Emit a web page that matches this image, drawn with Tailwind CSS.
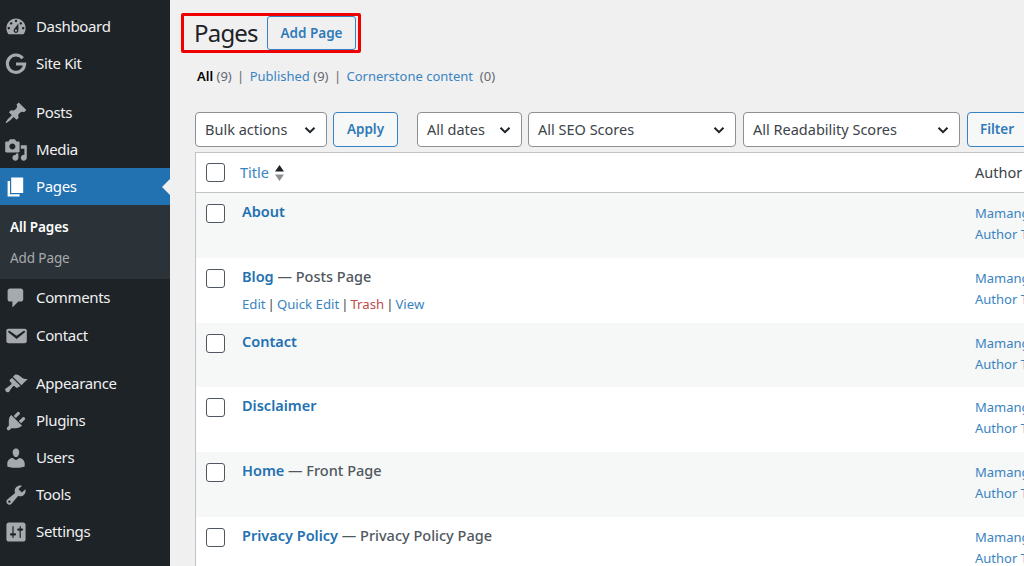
<!DOCTYPE html>
<html lang="en">
<head>
    <meta charset="UTF-8">
    <title>Pages</title>
    <script src="https://cdn.jsdelivr.net/npm/@tailwindcss/browser@4"></script>
</head>
<body class="bg-[#f0f0f1] font-['Noto_Sans',sans-serif] text-[#3c434a] text-[14.5px]">
<div class="flex h-[566px] w-[1024px] overflow-hidden">

    <!-- Sidebar -->
    <aside class="w-[170px] shrink-0 bg-[#1d2327] pt-[8px] text-[#f0f0f1] text-[15px] tracking-[-0.35px]">
        <a class="flex items-center h-[37px] gap-[8px] pl-[4px]"><svg class="w-6 h-6 fill-[#a7aaad]" viewBox="0 0 20 20"><path fill-rule="evenodd" d="M3.76 16h12.48c1.1-1.37 1.76-3.11 1.76-5 0-4.42-3.58-8-8-8s-8 3.58-8 8c0 1.89.66 3.63 1.76 5zM10 4c.55 0 1 .45 1 1s-.45 1-1 1-1-.45-1-1 .45-1 1-1zM6 6c.55 0 1 .45 1 1s-.45 1-1 1-1-.45-1-1 .45-1 1-1zm8 0c.55 0 1 .45 1 1s-.45 1-1 1-1-.45-1-1 .45-1 1-1zm-5.37 5.55L12 7v6c0 1.1-.9 2-2 2s-2-.9-2-2c0-.57.24-1.08.63-1.45zM4 10c.55 0 1 .45 1 1s-.45 1-1 1-1-.45-1-1 .45-1 1-1zm12 0c.55 0 1 .45 1 1s-.45 1-1 1-1-.45-1-1 .45-1 1-1zm-5 3c0-.55-.45-1-1-1s-1 .45-1 1 .45 1 1 1 1-.45 1-1z"/></svg>Dashboard</a>
        <a class="flex items-center h-[37px] gap-[8px] pl-[4px]"><svg class="w-6 h-6 fill-none stroke-[#a7aaad] stroke-[2.6]" viewBox="0 0 20 20"><path d="M15.6 5.2A7.2 7.2 0 1 0 17.2 10H10"/></svg>Site Kit</a>

        <a class="flex items-center h-[37px] gap-[8px] pl-[4px] mt-[12px]"><svg class="w-6 h-6 fill-[#a7aaad]" viewBox="0 0 20 20"><path d="M10.44 3.02l1.82-1.82 6.36 6.35-1.83 1.82c-1.05-.68-2.48-.57-3.41.36l-.75.75c-.92.93-1.04 2.35-.35 3.41l-1.83 1.82-2.41-2.41-2.8 2.79c-.42.42-3.38 2.71-3.8 2.29s1.86-3.39 2.28-3.81l2.79-2.79L4.1 9.36l1.83-1.82c1.05.69 2.48.57 3.4-.36l.75-.75c.93-.92 1.05-2.35.36-3.41z"/></svg>Posts</a>
        <a class="flex items-center h-[37px] gap-[8px] pl-[4px]"><svg class="w-6 h-6 fill-[#a7aaad]" viewBox="0 0 20 20"><path fill-rule="evenodd" d="M13 11V4c0-.55-.45-1-1-1h-1.67L9 1H5L3.67 3H2c-.55 0-1 .45-1 1v7c0 .55.45 1 1 1h10c.55 0 1-.45 1-1zM7 4.5c1.38 0 2.5 1.12 2.5 2.5S8.38 9.5 7 9.5 4.5 8.38 4.5 7 5.62 4.5 7 4.5zM14 6h5v10.5c0 1.38-1.12 2.5-2.5 2.5S14 17.88 14 16.5s1.12-2.5 2.5-2.5c.17 0 .34.02.5.05V9h-3V6zm-4 8.05V13h2v3.5c0 1.38-1.12 2.5-2.5 2.5S7 17.88 7 16.5 8.12 14 9.5 14c.17 0 .34.02.5.05z"/></svg>Media</a>
        <a class="relative flex items-center h-[37px] gap-[8px] pl-[4px] bg-[#2271b1] text-white"><svg class="w-6 h-6 fill-white" viewBox="0 0 20 20"><path d="M6 15V2h10v13H6zm-1 1h8v2H3V5h2v11z"/></svg>Pages<span class="absolute right-0 top-[11px] border-y-[8px] border-r-[8px] border-y-transparent border-r-[#f0f0f1]"></span></a>
        <div class="bg-[#2c3338] h-[74px] pt-[7px] pl-[10px] text-[13.5px] tracking-[-0.1px]">
            <a class="flex items-center h-[30px] font-semibold text-white">All Pages</a>
            <a class="flex items-center h-[32px] text-[#a7aaad]">Add Page</a>
        </div>
        <a class="flex items-center h-[37px] gap-[8px] pl-[4px]"><svg class="w-6 h-6 fill-[#a7aaad]" viewBox="0 0 20 20"><path d="M5 2h9c1.1 0 2 .9 2 2v7c0 1.1-.9 2-2 2h-2l-5 5v-5H5c-1.1 0-2-.9-2-2V4c0-1.1.9-2 2-2z"/></svg>Comments</a>
        <a class="flex items-center h-[37px] gap-[8px] pl-[4px] mt-[1px]"><svg class="w-6 h-6 fill-[#a7aaad]" viewBox="0 0 20 20"><path d="M3.87 4h13.25C18.37 4 19 4.59 19 5.79v8.42c0 1.19-.63 1.79-1.88 1.79H3.87c-1.25 0-1.88-.6-1.88-1.79V5.79c0-1.2.63-1.79 1.88-1.79zm6.62 8.6l6.74-5.53c.24-.2.43-.66.13-1.07-.29-.41-.82-.42-1.17-.17l-5.7 3.86L4.8 5.83c-.35-.25-.88-.24-1.17.17-.3.41-.11.87.13 1.07z"/></svg>Contact</a>

        <a class="flex items-center h-[37px] gap-[8px] pl-[4px] mt-[11px]"><svg class="w-6 h-6 fill-[#a7aaad]" viewBox="0 0 20 20"><path d="M14.48 11.06L7.41 3.99l1.5-1.5c.5-.56 2.3-.47 3.51.32 1.21.8 1.43 1.28 2.91 2.1 1.18.64 2.45 1.26 4.45.85zm-.71.71L6.7 4.7 4.93 6.47c-.39.39-.39 1.02 0 1.41l1.06 1.06c.39.39.39 1.03 0 1.42-.6.6-1.43 1.11-2.21 1.69-.35.26-.7.53-1.01.84C1.43 13.23.87 14.1 1 14.97c.14.87 1.04 1.77 1.91 1.91.87.13 1.74-.43 2.08-1.77.31-.31.58-.66.84-1.01.58-.78 1.09-1.61 1.69-2.21.39-.39 1.03-.39 1.42 0l1.06 1.06c.39.39 1.02.39 1.41 0z"/></svg>Appearance</a>
        <a class="flex items-center h-[37px] gap-[8px] pl-[4px]"><svg class="w-6 h-6 fill-[#a7aaad]" viewBox="0 0 20 20"><path d="M13.11 4.36L9.87 7.6 8 5.73l3.24-3.24c.35-.34 1.05-.2 1.56.32.52.51.66 1.21.31 1.55zm-8 1.77l.91-1.12 9.01 9.01-1.19.84c-.71.71-2.63 1.16-3.82 1.16H6.14L4.9 17.26c-.59.59-1.54.59-2.12 0-.59-.58-.59-1.53 0-2.12l1.24-1.24v-3.88c0-1.13.4-3.19 1.09-3.89zm7.26 3.97l3.24-3.24c.34-.35 1.04-.21 1.55.31.52.51.66 1.21.31 1.55l-3.24 3.25z"/></svg>Plugins</a>
        <a class="flex items-center h-[37px] gap-[8px] pl-[4px]"><svg class="w-6 h-6 fill-[#a7aaad]" viewBox="0 0 20 20"><path d="M10 9.25c-2.27 0-2.73-3.44-2.73-3.44C7 4.02 7.82 2 9.97 2c2.16 0 2.98 2.02 2.71 3.81 0 0-.41 3.44-2.68 3.44zm0 2.57L12.72 10c2.39 0 4.52 2.33 4.52 4.53v2.49s-3.65 1.13-7.24 1.13c-3.65 0-7.24-1.13-7.24-1.13v-2.49c0-2.25 1.94-4.48 4.47-4.48z"/></svg>Users</a>
        <a class="flex items-center h-[37px] gap-[8px] pl-[4px]"><svg class="w-6 h-6 fill-[#a7aaad]" viewBox="0 0 20 20"><path fill-rule="evenodd" d="M16.68 9.77c-1.34 1.34-3.3 1.67-4.95.99l-5.41 6.52c-.99.99-2.59.99-3.58 0s-.99-2.59 0-3.57l6.52-5.42c-.68-1.65-.35-3.61.99-4.95 1.28-1.28 3.12-1.62 4.72-1.06l-2.89 2.89 2.82 2.82 2.86-2.87c.53 1.58.18 3.39-1.08 4.65zM3.81 16.21c.4.39 1.04.39 1.43 0 .4-.4.4-1.04 0-1.43-.39-.4-1.03-.4-1.43 0-.39.39-.39 1.03 0 1.43z"/></svg>Tools</a>
        <a class="flex items-center h-[37px] gap-[8px] pl-[4px]"><svg class="w-6 h-6 fill-[#a7aaad]" viewBox="0 0 20 20"><path fill-rule="evenodd" d="M18 16V4c0-1.1-.9-2-2-2H4c-1.1 0-2 .9-2 2v12c0 1.1.9 2 2 2h12c1.1 0 2-.9 2-2zM8 11h1c.55 0 1 .45 1 1s-.45 1-1 1H8v1.5c0 .28-.22.5-.5.5s-.5-.22-.5-.5V13H6c-.55 0-1-.45-1-1s.45-1 1-1h1V5.5c0-.28.22-.5.5-.5s.5.22.5.5V11zm5-2h-1c-.55 0-1-.45-1-1s.45-1 1-1h1V5.5c0-.28.22-.5.5-.5s.5.22.5.5V7h1c.55 0 1 .45 1 1s-.45 1-1 1h-1v5.5c0 .28-.22.5-.5.5s-.5-.22-.5-.5V9z"/></svg>Settings</a>
    </aside>

    <!-- Main -->
    <main class="min-w-0 flex-1">
        <div class="ml-[11px] mt-[13px] flex h-[40px] w-[180px] items-center rounded-[2px] border-[3px] border-[#f00000]">
            <h1 class="w-[83px] pl-[10px] text-[24px] leading-none tracking-[-0.8px] text-[#1d2327]">Pages</h1>
            <a class="flex h-[34px] w-[89px] items-center justify-center rounded-[3px] border border-[#3582c4] text-[13.5px] font-semibold text-[#2f7ab8]">Add Page</a>
        </div>

        <div class="ml-[27px] mt-[13px] h-[20px] whitespace-pre text-[13px] leading-[20px] text-[#646970]"><b class="font-semibold text-black">All</b> (9) <span class="mx-[2px]">|</span> <a class="text-[#3a84bf]">Published</a> (9) <span class="mx-[2px]">|</span> <a class="text-[#3a84bf]">Cornerstone content</a>  (0)</div>

        <div class="ml-[25px] mt-[26px] flex h-[35px] w-[900px] text-[14.5px]">
            <div class="flex w-[132px] items-center justify-between rounded-[4px] border border-[#8c8f94] bg-white pl-[9px] pr-[10px]">Bulk actions<svg class="h-3 w-3 fill-none stroke-[#1d2327] stroke-[2]" viewBox="0 0 12 12"><path d="M1.5 3.8 6 8.2l4.5-4.4"/></svg></div>
            <a class="ml-[6px] flex w-[65px] items-center justify-center rounded-[4px] border border-[#3582c4] bg-[#f6f7f7] text-[13.5px] font-semibold text-[#2f7ab8]">Apply</a>
            <div class="ml-[19px] flex w-[105px] items-center justify-between rounded-[4px] border border-[#8c8f94] bg-white pl-[9px] pr-[10px]">All dates<svg class="h-3 w-3 fill-none stroke-[#1d2327] stroke-[2]" viewBox="0 0 12 12"><path d="M1.5 3.8 6 8.2l4.5-4.4"/></svg></div>
            <div class="ml-[6px] flex w-[208px] items-center justify-between rounded-[4px] border border-[#8c8f94] bg-white pl-[9px] pr-[10px]">All SEO Scores<svg class="h-3 w-3 fill-none stroke-[#1d2327] stroke-[2]" viewBox="0 0 12 12"><path d="M1.5 3.8 6 8.2l4.5-4.4"/></svg></div>
            <div class="ml-[7px] flex w-[217px] items-center justify-between rounded-[4px] border border-[#8c8f94] bg-white pl-[9px] pr-[10px]">All Readability Scores<svg class="h-3 w-3 fill-none stroke-[#1d2327] stroke-[2]" viewBox="0 0 12 12"><path d="M1.5 3.8 6 8.2l4.5-4.4"/></svg></div>
            <a class="ml-[7px] flex w-[60px] shrink-0 items-center justify-center rounded-[4px] border border-[#3582c4] bg-[#f6f7f7] text-[13.5px] font-semibold text-[#2f7ab8]">Filter</a>
        </div>

        <!-- Table -->
        <div class="ml-[25px] mt-[5px] w-[900px] border-l border-t border-[#c3c4c7] bg-white">
            <div class="relative flex h-[40px] items-center border-b border-[#c3c4c7]">
                <span class="ml-[10px] h-[19px] w-[19px] rounded-[3px] border border-[#50575e] bg-white"></span>
                <a class="ml-[15px] text-[#3a84bf]">Title</a>
                <svg class="ml-[5px] h-[18px] w-[11px]" viewBox="0 0 10 18"><path class="fill-[#1d2327]" d="M5 1l4.5 6.5H.5z"/><path class="fill-[#8c8f94]" d="M5 17l4.5-6.5H.5z"/></svg>
                <span class="absolute left-[779px] text-[#3c434a]">Author</span>
            </div>

            <div class="relative h-[64.8px] bg-[#f6f7f7]">
                <span class="absolute left-[10px] top-[11px] h-[19px] w-[19px] rounded-[3px] border border-[#50575e] bg-white"></span>
                <div class="pl-[46px] pt-[6px] leading-[24px]"><a class="font-semibold text-[#2271b1]">About</a></div>
                <div class="absolute left-[779px] top-[10px] whitespace-nowrap text-[13px] leading-[21px] text-[#3a84bf]">Mamang<br>Author T</div>
            </div>
            <div class="relative h-[64.8px]">
                <span class="absolute left-[10px] top-[11px] h-[19px] w-[19px] rounded-[3px] border border-[#50575e] bg-white"></span>
                <div class="pl-[46px] pt-[6px] leading-[24px]"><a class="font-semibold text-[#2271b1]">Blog</a> <span class="font-medium text-[#50575e]">— Posts Page</span></div>
                <div class="pl-[46px] pt-[6px] text-[13.2px] leading-[20px]"><a class="text-[#3a84bf]">Edit</a><span class="mx-[2px]">|</span><a class="text-[#3a84bf]">Quick Edit</a><span class="mx-[2px]">|</span><a class="text-[#c04a4b]">Trash</a><span class="mx-[2px]">|</span><a class="text-[#3a84bf]">View</a></div>
                <div class="absolute left-[779px] top-[10px] whitespace-nowrap text-[13px] leading-[21px] text-[#3a84bf]">Mamang<br>Author T</div>
            </div>
            <div class="relative h-[64.8px] bg-[#f6f7f7]">
                <span class="absolute left-[10px] top-[11px] h-[19px] w-[19px] rounded-[3px] border border-[#50575e] bg-white"></span>
                <div class="pl-[46px] pt-[6px] leading-[24px]"><a class="font-semibold text-[#2271b1]">Contact</a></div>
                <div class="absolute left-[779px] top-[10px] whitespace-nowrap text-[13px] leading-[21px] text-[#3a84bf]">Mamang<br>Author T</div>
            </div>
            <div class="relative h-[64.8px]">
                <span class="absolute left-[10px] top-[11px] h-[19px] w-[19px] rounded-[3px] border border-[#50575e] bg-white"></span>
                <div class="pl-[46px] pt-[6px] leading-[24px]"><a class="font-semibold text-[#2271b1]">Disclaimer</a></div>
                <div class="absolute left-[779px] top-[10px] whitespace-nowrap text-[13px] leading-[21px] text-[#3a84bf]">Mamang<br>Author T</div>
            </div>
            <div class="relative h-[64.8px] bg-[#f6f7f7]">
                <span class="absolute left-[10px] top-[11px] h-[19px] w-[19px] rounded-[3px] border border-[#50575e] bg-white"></span>
                <div class="pl-[46px] pt-[6px] leading-[24px]"><a class="font-semibold text-[#2271b1]">Home</a> <span class="font-medium text-[#50575e]">— Front Page</span></div>
                <div class="absolute left-[779px] top-[10px] whitespace-nowrap text-[13px] leading-[21px] text-[#3a84bf]">Mamang<br>Author T</div>
            </div>
            <div class="relative h-[64.8px]">
                <span class="absolute left-[10px] top-[11px] h-[19px] w-[19px] rounded-[3px] border border-[#50575e] bg-white"></span>
                <div class="pl-[46px] pt-[6px] leading-[24px]"><a class="font-semibold text-[#2271b1]">Privacy Policy</a> <span class="font-medium text-[#50575e]">— Privacy Policy Page</span></div>
                <div class="absolute left-[779px] top-[10px] whitespace-nowrap text-[13px] leading-[21px] text-[#3a84bf]">Mamang<br>Author T</div>
            </div>
        </div>
    </main>
</div>
</body>
</html>
